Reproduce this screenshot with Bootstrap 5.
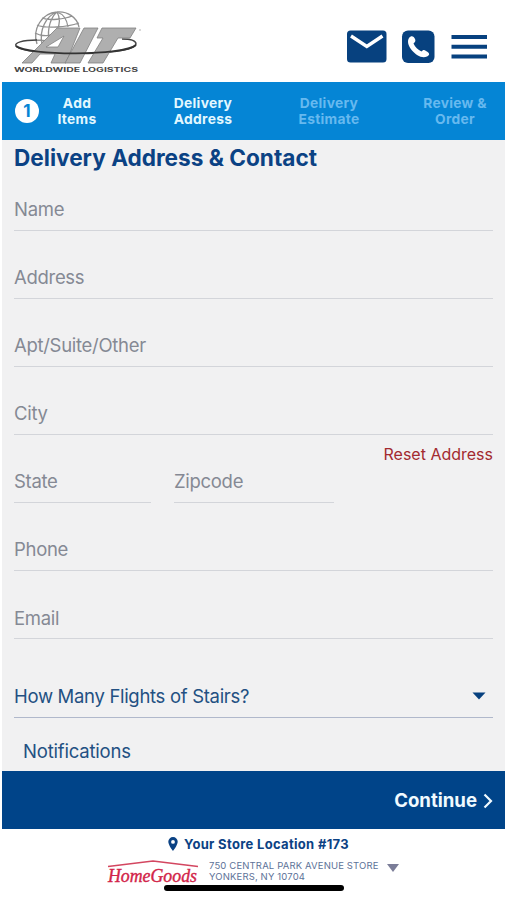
<!DOCTYPE html>
<html lang="en">
<head>
<meta charset="utf-8">
<meta name="viewport" content="width=device-width, initial-scale=1">
<title>Delivery Address &amp; Contact</title>
<link href="https://cdn.jsdelivr.net/npm/bootstrap@5.3.0/dist/css/bootstrap.min.css" rel="stylesheet">
<style>
body{font-family:Inter,"Liberation Sans",sans-serif;background:#fff;color:#0b4284;height:900px;overflow:hidden}
svg{display:block;flex:none;overflow:visible}
.shell{width:503px;margin-left:2px;height:900px}
.topbar{height:82px;padding:11px 18px 0 11px}
.tools{gap:15px;padding-top:19px}
.steps{height:58px;background:#0585d5;color:#e2f8ff;font-size:13.8px;line-height:16.5px;font-weight:700;letter-spacing:.3px;padding-left:13px}
.steps .num{flex:none;width:24px;height:24px;background:#fff;color:#0585d5;font-size:17px;letter-spacing:0}
.step{flex:none;width:126px;text-align:center}
.step.first{width:76px;margin-right:25px}
.step.last{width:100px;margin-left:13px}
.step.todo{color:#67b9ef}
.sheet{height:631px;background:#f1f1f2;padding:0 12px}
.title{height:50px;font-size:22.6px;line-height:35px;font-weight:700;margin:0;white-space:nowrap}
.field{height:40.6px;margin-bottom:27.5px;border-bottom:1.5px solid #d3d5da;color:#858994;font-size:18.5px;letter-spacing:-.3px;line-height:38.5px;white-space:nowrap}
.field input{border:0;background:transparent;min-width:0;width:0;flex:1;padding:0;outline:0}
.state{width:137px;margin-right:23px}
.zip{width:160px}
.reset{color:#a32a30;font-size:16px;line-height:20px;margin-top:-18px;white-space:nowrap}
.stairs{height:40px;margin-top:38.5px;border-bottom:1.5px solid #b0b8cb;font-size:18.5px;letter-spacing:-.31px;line-height:36px;color:#235082;padding:0 7px 2px 0}
.notify{font-size:18.5px;letter-spacing:-.2px;line-height:28px;padding:19px 0 0 9px;color:#235082}
.next{height:58px;background:#004489;color:#f0faff;font-size:18.6px;font-weight:700;padding:1px 12px 0 0;gap:6px}
.foot{height:71px}
.store{font-size:13px;line-height:18px;font-weight:700;letter-spacing:.32px;padding:6px 0 0 166px;gap:6px}
.branch{padding:6px 0 0 105px}
.addr{font-size:9.5px;line-height:11px;letter-spacing:.15px;color:#5d7298;white-space:nowrap;padding-top:1px}
.homebar{position:absolute;left:164px;top:885px;width:180px;height:6px;border-radius:3px;background:#000}
</style>
</head>
<body>
<div class="shell d-flex flex-column">
<header class="topbar d-flex justify-content-between align-items-start">
<svg width="130" height="63" viewBox="13 11 130 63" role="img" aria-label="AIT Worldwide Logistics">
<g fill="none" stroke="#909090" stroke-width="1.3">
<path d="M37 44C32 29 42 13 57 12C67 11 77 17 79 27M42 44C39 30 46 16 57 12M49 40C47 28 51 17 57 12M57 31C60 24 60 17 57 12M68 27C67 20 63 14 57 12M42 18C49 21 65 19 72 16M37 25C46 29 67 27 79 23M35 33C42 37 52 36 57 33M36 40L49 41"/>
</g>
<path d="M37 40C22 40 14 43 16 46C21 56 133 57 136 44C136 40 129 39 122 39" fill="none" stroke="#444" stroke-width="1.4"/>
<g fill="#afafaf" stroke="#808080" stroke-width=".8">
<path d="M22 63L57 28H80L66 63H51L55 54H40L32 63ZM46 47H58L64 36Z" fill-rule="evenodd"/>
<path d="M84 28H98L80 63H65Z"/><path d="M102 28H136L130 38H118L103 63H88L103 38H97Z"/></g>
<path d="M16 46C28 56 124 56 136 45" fill="none" stroke="#333" stroke-width="1.7"/>
<circle cx="140" cy="30" r=".8" fill="#aaa"/>
<text x="14" y="72" font-family="Inter,sans-serif" font-weight="700" font-size="6" textLength="124" lengthAdjust="spacingAndGlyphs" fill="#444">WORLDWIDE LOGISTICS</text>
</svg>
<div class="tools d-flex">
<svg width="40" height="33" viewBox="0 0 40 33"><rect y=".5" width="39.5" height="32" rx="3.5" fill="#07417f"/><path d="M4 6L19.8 16.5L35.5 6" fill="none" stroke="#fff" stroke-width="3.4"/></svg>
<svg width="33" height="33" viewBox="0 0 33 33"><rect y=".5" width="32.5" height="32.5" rx="6" fill="#07417f"/><path d="M7 8C9 5 12 6 13 9C14 11 13 12 11.5 13.5C13 17 16 20 19.5 21.500C21 20 22 19.500 24 21C28 23 28 25 25 26.500C20 29 14 25 10 20.500C6 16 5 11 7 8Z" fill="#fff"/></svg>
<svg width="37" height="33" viewBox="-1 0 37 33"><path d="M.5 7H36M.5 16.800H36M.5 26.600H36" stroke="#07417f" stroke-width="4"/></svg>
</div>
</header>
<nav class="steps d-flex align-items-center">
<span class="num rounded-circle d-flex align-items-center justify-content-center">1</span>
<span class="step first">Add<br>Items</span><span class="step">Delivery<br>Address</span><span class="step todo">Delivery<br>Estimate</span><span class="step last todo">Review &amp;<br>Order</span>
</nav>
<main class="sheet">
<h1 class="title">Delivery Address &amp; Contact</h1>
<label class="field d-flex"><span>Name</span><input type="text"></label>
<label class="field d-flex"><span>Address</span><input type="text"></label>
<label class="field d-flex"><span>Apt/Suite/Other</span><input type="text"></label>
<label class="field d-flex"><span>City</span><input type="text"></label>
<div class="d-flex">
<label class="field state d-flex"><span>State</span><input type="text"></label>
<label class="field zip d-flex"><span>Zipcode</span><input type="text"></label>
<a class="reset ms-auto text-decoration-none" href="#">Reset Address</a>
</div>
<label class="field d-flex"><span>Phone</span><input type="tel"></label>
<label class="field d-flex"><span>Email</span><input type="email"></label>
<div class="stairs d-flex align-items-center justify-content-between"><span>How Many Flights of Stairs?</span><svg width="14" height="8" viewBox="0 0 14 8"><path d="M.5 .5H13.500L7 7.500Z" fill="#07417f"/></svg></div>
<div class="notify">Notifications</div>
</main>
<div class="next d-flex align-items-center justify-content-end"><span>Continue</span><svg width="10" height="16" viewBox="0 0 10 16"><path d="M1.500 1.500L8 8L1.500 14.500" fill="none" stroke="#f0faff" stroke-width="2.200"/></svg></div>
<footer class="foot">
<div class="store d-flex align-items-center"><svg width="10" height="14" viewBox="0 0 10 14"><path d="M5 0A4.700 4.700 0 0 0 .3 4.700C.3 8 5 14 5 14S9.700 8 9.700 4.700A4.700 4.700 0 0 0 5 0ZM5 3A1.900 1.900 0 1 1 5 6.800A1.900 1.900 0 0 1 5 3Z" fill="#0b4284" fill-rule="evenodd"/></svg><span>Your Store Location #173</span></div>
<div class="branch d-flex">
<svg width="94" height="30" viewBox="0 0 94 30" role="img" aria-label="HomeGoods"><path d="M1 7.500L46 2L91 7.500" fill="none" stroke="#d34660" stroke-width="1.300"/><text x="1" y="22.500" font-family="'Liberation Serif',serif" font-style="italic" font-weight="400" stroke="#d22449" stroke-width=".4" font-size="19" textLength="89" lengthAdjust="spacingAndGlyphs" fill="#d22449">HomeGoods</text></svg>
<div class="addr ps-2">750 CENTRAL PARK AVENUE STORE<br>YONKERS, NY 10704</div>
<svg class="ms-2 mt-1" width="12" height="9" viewBox="0 0 12 9"><path d="M0 1H12L6 9Z" fill="#7b7d98"/></svg>
</div>
</footer>
</div>
<div class="homebar"></div>
<script src="https://cdn.jsdelivr.net/npm/bootstrap@5.3.0/dist/js/bootstrap.bundle.min.js"></script>
</body>
</html>
